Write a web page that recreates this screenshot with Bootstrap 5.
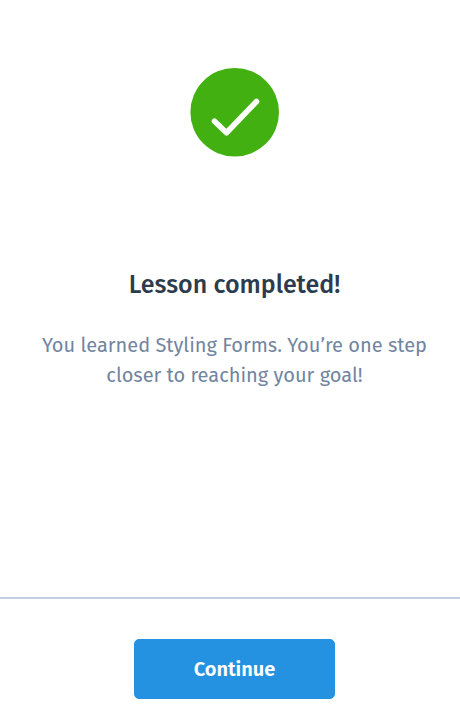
<!DOCTYPE html>
<html lang="en">
<head>
<meta charset="utf-8">
<meta name="viewport" content="width=device-width, initial-scale=1">
<title>Lesson completed</title>
<link href="https://cdn.jsdelivr.net/npm/bootstrap@5.3.0/dist/css/bootstrap.min.css" rel="stylesheet">
<style>
  body { font-family: "Fira Sans", "Noto Sans", sans-serif; background: #fff; }
  .lesson-body { padding: 67px 31px 0 40px; }
  .lesson-check { width: 90px; height: 90px; margin-bottom: 110px; }
  .lesson-title { font-size: 25px; line-height: 36px; font-weight: 500; color: #2d3b4e; margin-bottom: 27px; }
  .lesson-text { font-size: 20px; line-height: 30px; color: #71859f; }
  .lesson-footer { border-top: 2px solid #c3cfdc; padding: 40px 0 24px 9px; }
  .lesson-continue {
    --bs-btn-color: #fff; --bs-btn-bg: #2492e1; --bs-btn-border-color: #2492e1;
    --bs-btn-hover-color: #fff; --bs-btn-hover-bg: #1c83cd; --bs-btn-hover-border-color: #1c83cd;
    --bs-btn-border-radius: 5px;
    width: 201px; height: 60px; font-size: 20px; font-weight: 600;
  }
</style>
</head>
<body class="min-vh-100 d-flex flex-column">
  <main class="lesson-body flex-grow-1 text-center">
    <svg class="lesson-check d-block mx-auto" viewBox="0 0 90 90" role="img" aria-label="Completed">
      <circle cx="44.7" cy="45.2" r="44.3" fill="#41b010"/>
      <path d="M24.5 54.3 36.5 65.7 66.5 34.5" fill="none" stroke="#fff" stroke-width="5.6" stroke-linecap="round" stroke-linejoin="round"/>
    </svg>
    <h1 class="lesson-title">Lesson completed!</h1>
    <p class="lesson-text mb-0">You learned Styling Forms. You’re one step closer to reaching your goal!</p>
  </main>
  <footer class="lesson-footer d-flex justify-content-center">
    <button type="button" class="btn lesson-continue">Continue</button>
  </footer>
  <script src="https://cdn.jsdelivr.net/npm/bootstrap@5.3.0/dist/js/bootstrap.bundle.min.js"></script>
</body>
</html>
